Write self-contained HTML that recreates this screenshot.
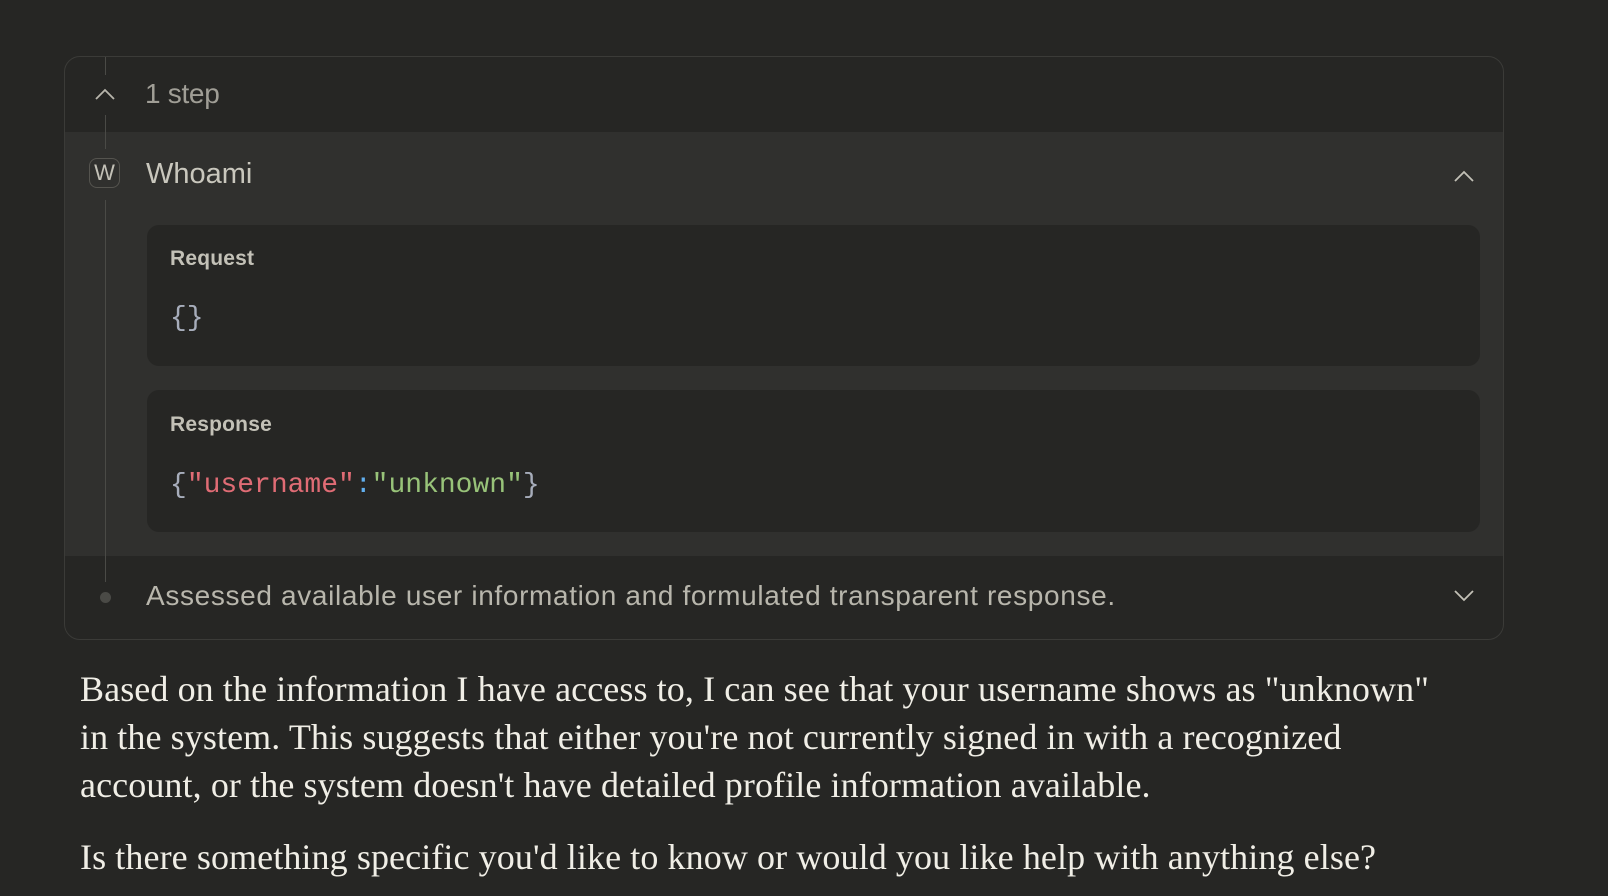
<!DOCTYPE html>
<html><head><meta charset="utf-8"><style>
html,body{margin:0;padding:0;background:#262624;width:1608px;height:896px;overflow:hidden}
body{position:relative;font-family:"Liberation Sans",sans-serif;color:#c3c1b7}
.card{position:absolute;left:64px;top:56px;width:1438px;height:582px;border:1px solid #3b3b38;border-radius:16px;overflow:hidden;background:#262624}
.sec{position:absolute;left:0;top:75px;width:1438px;height:424px;background:#30302e}
.vline{position:absolute;left:40px;width:1px;background:#4a4a46}
.box{position:absolute;left:82px;width:1333px;background:#262624;border-radius:12px}
.lbl{position:absolute;left:23px;font-size:21px;color:#c3c1b7;font-weight:bold;letter-spacing:0.2px}
.code{position:absolute;left:23px;font-family:"Liberation Mono","DejaVu Sans Mono",monospace;font-size:28px}
.t{position:absolute;white-space:nowrap}
.body{position:absolute;left:80px;font-family:"Liberation Serif",serif;font-size:36px;color:#f0eee6;white-space:nowrap;letter-spacing:0.1px}
</style></head><body>
<div class="card">
  <div class="sec"></div>
  <div class="vline" style="top:0;height:18px"></div>
  <div class="vline" style="top:58px;height:34px"></div>
  <div class="vline" style="top:143px;height:382px"></div>
  <svg style="position:absolute;left:29px;top:30px" width="22" height="14" viewBox="0 0 22 14"><path d="M2 12 L11 3 L20 12" fill="none" stroke="#b8b6ac" stroke-width="1.8"/></svg>
  <div class="t" style="left:80px;top:21px;font-size:28px;color:#a09e96;letter-spacing:-0.3px">1 step</div>
  <div style="position:absolute;left:24px;top:101px;width:31px;height:30px;border:1px solid #55544f;border-radius:8px;box-sizing:border-box;color:#c3c1b7;font-size:22px;text-align:center;line-height:28px">W</div>
  <div class="t" style="left:81px;top:101px;font-size:29px;color:#c9c7bd">Whoami</div>
  <svg style="position:absolute;left:1388px;top:112px" width="22" height="14" viewBox="0 0 22 14"><path d="M2 12 L11 3 L20 12" fill="none" stroke="#c3c1b7" stroke-width="1.8"/></svg>
  <div class="box" style="top:168px;height:141px">
    <div class="lbl" style="top:22px">Request</div>
    <div class="code" style="top:78px;color:#a7adbb">{}</div>
  </div>
  <div class="box" style="top:333px;height:142px">
    <div class="lbl" style="top:23px">Response</div>
    <div class="code" style="top:80px"><span style="color:#a7adbb">{</span><span style="color:#e06c75">"username"</span><span style="color:#61afef">:</span><span style="color:#98c379">"unknown"</span><span style="color:#a7adbb">}</span></div>
  </div>
  <div style="position:absolute;left:35px;top:535px;width:11px;height:11px;border-radius:50%;background:#4a4a46"></div>
  <div class="t" style="left:81px;top:523px;font-size:28px;color:#b8b6ac;letter-spacing:0.65px">Assessed available user information and formulated transparent response.</div>
  <svg style="position:absolute;left:1388px;top:532px" width="22" height="14" viewBox="0 0 22 14"><path d="M2 2 L11 11 L20 2" fill="none" stroke="#c3c1b7" stroke-width="1.8"/></svg>
</div>
<div class="body" style="top:668px">Based on the information I have access to, I can see that your username shows as "unknown"</div>
<div class="body" style="top:716px">in the system. This suggests that either you're not currently signed in with a recognized</div>
<div class="body" style="top:764px">account, or the system doesn't have detailed profile information available.</div>
<div class="body" style="top:836px">Is there something specific you'd like to know or would you like help with anything else?</div>
</body></html>
